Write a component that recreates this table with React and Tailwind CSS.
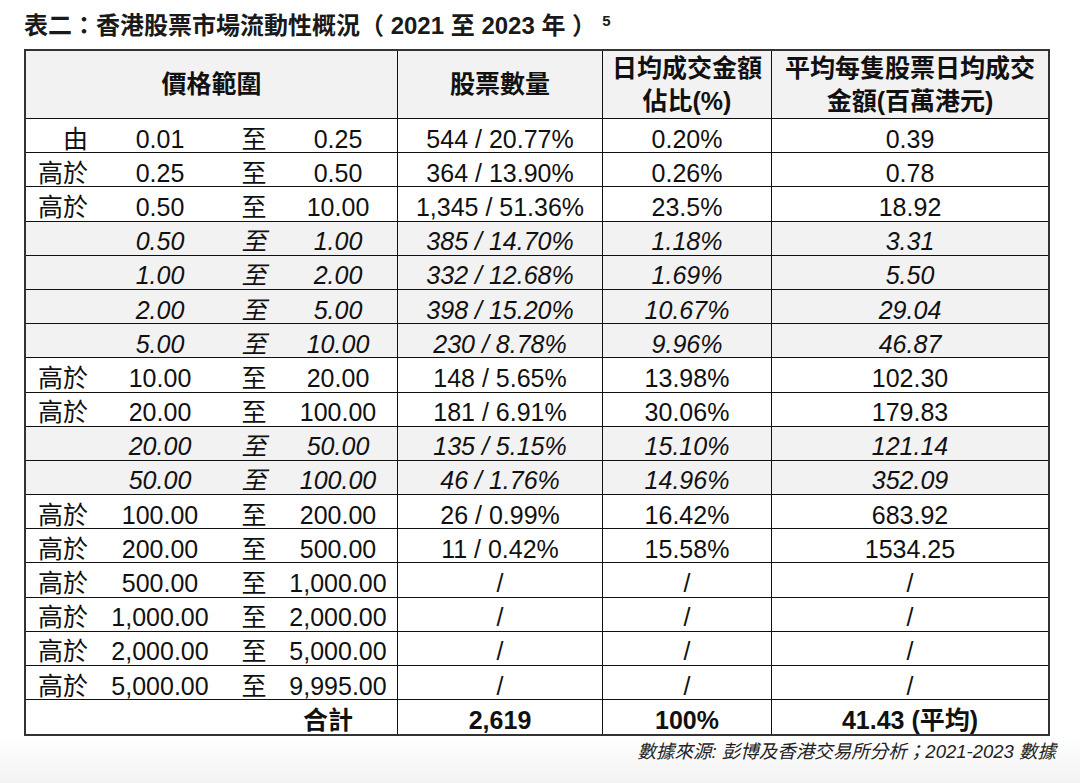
import React from "react";

const rows = [
  { label: "由", lo: "0.01", hi: "0.25", count: "544 / 20.77%", share: "0.20%", avg: "0.39" },
  { label: "高於", lo: "0.25", hi: "0.50", count: "364 / 13.90%", share: "0.26%", avg: "0.78" },
  { label: "高於", lo: "0.50", hi: "10.00", count: "1,345 / 51.36%", share: "23.5%", avg: "18.92" },
  { sub: true, lo: "0.50", hi: "1.00", count: "385 / 14.70%", share: "1.18%", avg: "3.31" },
  { sub: true, lo: "1.00", hi: "2.00", count: "332 / 12.68%", share: "1.69%", avg: "5.50" },
  { sub: true, lo: "2.00", hi: "5.00", count: "398 / 15.20%", share: "10.67%", avg: "29.04" },
  { sub: true, lo: "5.00", hi: "10.00", count: "230 / 8.78%", share: "9.96%", avg: "46.87" },
  { label: "高於", lo: "10.00", hi: "20.00", count: "148 / 5.65%", share: "13.98%", avg: "102.30" },
  { label: "高於", lo: "20.00", hi: "100.00", count: "181 / 6.91%", share: "30.06%", avg: "179.83" },
  { sub: true, lo: "20.00", hi: "50.00", count: "135 / 5.15%", share: "15.10%", avg: "121.14" },
  { sub: true, lo: "50.00", hi: "100.00", count: "46 / 1.76%", share: "14.96%", avg: "352.09" },
  { label: "高於", lo: "100.00", hi: "200.00", count: "26 / 0.99%", share: "16.42%", avg: "683.92" },
  { label: "高於", lo: "200.00", hi: "500.00", count: "11 / 0.42%", share: "15.58%", avg: "1534.25" },
  { label: "高於", lo: "500.00", hi: "1,000.00", count: "/", share: "/", avg: "/" },
  { label: "高於", lo: "1,000.00", hi: "2,000.00", count: "/", share: "/", avg: "/" },
  { label: "高於", lo: "2,000.00", hi: "5,000.00", count: "/", share: "/", avg: "/" },
  { label: "高於", lo: "5,000.00", hi: "9,995.00", count: "/", share: "/", avg: "/" },
];

const font = { fontFamily: '"Liberation Sans", Arial, "Noto Sans CJK TC", sans-serif' };

function Row({ r }) {
  return (
    <div
      className={
        "grid grid-cols-[372px_205px_169px_276px] h-[34.2px] border-b border-[#111] " +
        (r.sub ? "bg-[#f2f2f2] italic" : "bg-white")
      }
    >
      <div className="flex items-center pt-[7px] border-r border-[#111]">
        <div className="w-[66px] pr-[4px] text-right">{r.label}</div>
        <div className="w-[136px] text-center">{r.lo}</div>
        <div className="w-[52px] text-center">至</div>
        <div className="w-[116px] text-center">{r.hi}</div>
      </div>
      <div className="flex items-center justify-center pt-[7px] border-r border-[#111]">{r.count}</div>
      <div className="flex items-center justify-center pt-[7px] border-r border-[#111]">{r.share}</div>
      <div className="flex items-center justify-center pt-[7px]">{r.avg}</div>
    </div>
  );
}

export default function App() {
  return (
    <div
      className="w-[1080px] h-[783px] bg-[linear-gradient(to_bottom,#ffffff_735px,#f3f3f3_783px)] text-[#111]"
      style={font}
    >
      <div className="pl-[24px] pt-[10px] h-[49px] text-[24px] font-bold leading-[32px] text-[#1a1a1a]">
        表二：香港股票市場流動性概況（ 2021 至 2023 年 ）<sup className="text-[15px] ml-[6px] relative top-[-8px]">5</sup>
      </div>

      <div className="ml-[24px] w-[1026px] border-2 border-[#333] text-[25px] leading-none">
        <div className="grid grid-cols-[372px_205px_169px_276px] h-[68px] border-b border-[#111] bg-[#f2f2f2] font-bold leading-[33px]">
          <div className="flex items-center justify-center border-r border-[#111]">價格範圍</div>
          <div className="flex items-center justify-center border-r border-[#111]">股票數量</div>
          <div className="flex flex-col items-center justify-center border-r border-[#111]">
            <span>日均成交金額</span>
            <span>佔比(%)</span>
          </div>
          <div className="flex flex-col items-center justify-center">
            <span>平均每隻股票日均成交</span>
            <span>金額(百萬港元)</span>
          </div>
        </div>

        {rows.map((r, i) => (
          <Row key={i} r={r} />
        ))}

        <div className="grid grid-cols-[372px_205px_169px_276px] h-[34.2px] bg-white font-bold">
          <div className="flex items-center justify-end pt-[6px] pr-[44px] border-r border-[#111]">合計</div>
          <div className="flex items-center justify-center pt-[6px] border-r border-[#111]">2,619</div>
          <div className="flex items-center justify-center pt-[6px] border-r border-[#111]">100%</div>
          <div className="flex items-center justify-center pt-[6px]">41.43 (平均)</div>
        </div>
      </div>

      <div className="w-[1056px] pt-[5px] text-right text-[18.5px] italic leading-[22px] text-[#222]">
        數據來源: 彭博及香港交易所分析；2021-2023 數據
      </div>
    </div>
  );
}
